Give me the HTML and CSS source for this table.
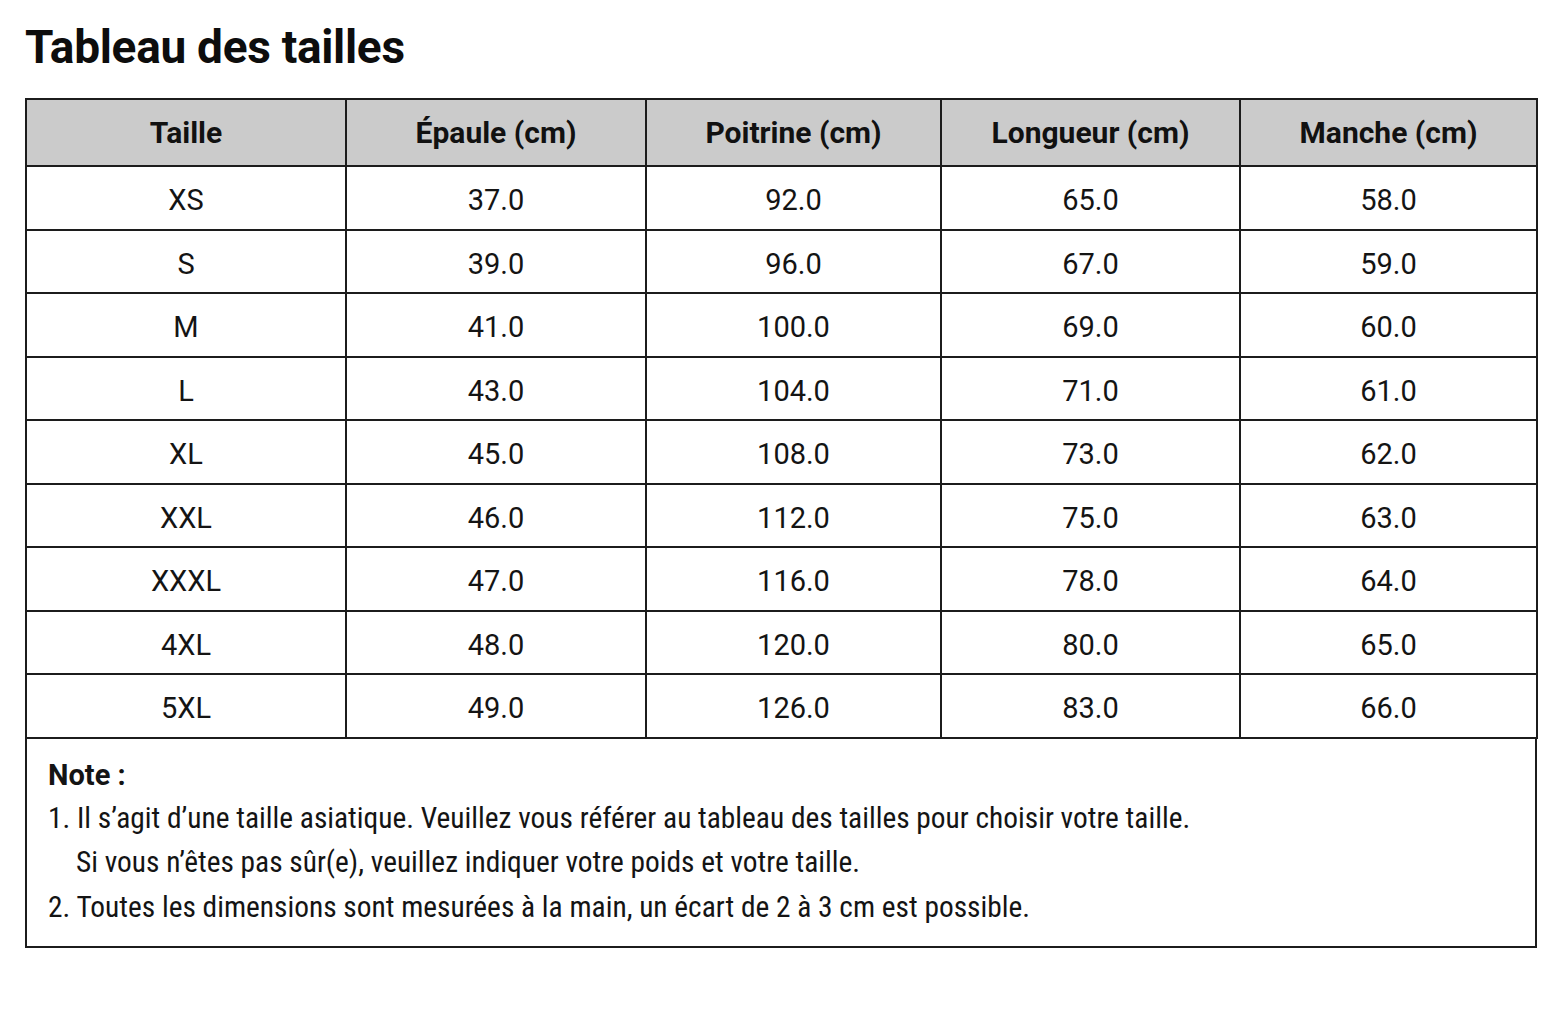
FILE: index.html
```html
<!DOCTYPE html>
<html lang="fr">
<head>
<meta charset="utf-8">
<title>Tableau des tailles</title>
<link rel="stylesheet" href="styles.css">
</head>
<body>
<main class="page">
  <h1 class="title">Tableau des tailles</h1>
  <table class="sizes">
    <colgroup>
      <col class="c1"><col class="c2"><col class="c3"><col class="c4"><col class="c5">
    </colgroup>
    <thead>
      <tr class="head">
        <th>Taille</th><th>Épaule (cm)</th><th>Poitrine (cm)</th><th>Longueur (cm)</th><th>Manche (cm)</th>
      </tr>
    </thead>
    <tbody>
      <tr><td>XS</td><td>37.0</td><td>92.0</td><td>65.0</td><td>58.0</td></tr>
      <tr><td>S</td><td>39.0</td><td>96.0</td><td>67.0</td><td>59.0</td></tr>
      <tr><td>M</td><td>41.0</td><td>100.0</td><td>69.0</td><td>60.0</td></tr>
      <tr><td>L</td><td>43.0</td><td>104.0</td><td>71.0</td><td>61.0</td></tr>
      <tr><td>XL</td><td>45.0</td><td>108.0</td><td>73.0</td><td>62.0</td></tr>
      <tr><td>XXL</td><td>46.0</td><td>112.0</td><td>75.0</td><td>63.0</td></tr>
      <tr><td>XXXL</td><td>47.0</td><td>116.0</td><td>78.0</td><td>64.0</td></tr>
      <tr><td>4XL</td><td>48.0</td><td>120.0</td><td>80.0</td><td>65.0</td></tr>
      <tr><td>5XL</td><td>49.0</td><td>126.0</td><td>83.0</td><td>66.0</td></tr>
    </tbody>
  </table>
  <section class="note">
    <p class="note-title">Note :</p>
    <p class="note-line">1. Il s’agit d’une taille asiatique. Veuillez vous référer au tableau des tailles pour choisir votre taille.</p>
    <p class="note-line indent">Si vous n’êtes pas sûr(e), veuillez indiquer votre poids et votre taille.</p>
    <p class="note-line">2. Toutes les dimensions sont mesurées à la main, un écart de 2 à 3 cm est possible.</p>
  </section>
</main>
</body>
</html>
```
FILE: styles.css
```css
html, body {
  margin: 0;
  padding: 0;
  background: #ffffff;
}
body {
  font-family: "Roboto", "Open Sans", "Liberation Sans", sans-serif;
  font-stretch: 75%;
  color: #141414;
}
.page {
  padding: 0 21px 0 25px;
}
.title {
  margin: 0;
  padding-top: 20px;
  height: 98px;
  box-sizing: border-box;
  font-size: 46px;
  line-height: 54px;
  font-weight: 700;
  font-stretch: 88%;
  color: #0d0d0d;
  letter-spacing: -0.3px;
}
.sizes {
  width: 1511px;
  border-collapse: collapse;
  table-layout: fixed;
}
.c1 { width: 320px; }
.c2 { width: 300px; }
.c3 { width: 295px; }
.c4 { width: 299px; }
.c5 { width: 297px; }
.sizes th,
.sizes td {
  border: 2px solid #1c1c1c;
  text-align: center;
  padding: 0;
}
.sizes th {
  height: 65px;
  background: #cbcbcb;
  font-size: 30px;
  font-weight: 700;
  font-stretch: 88%;
  color: #111;
}
.sizes td {
  height: 63.5px;
  padding-top: 5px;
  box-sizing: border-box;
  font-size: 29px;
  font-weight: 400;
  font-stretch: 88%;
}
.note {
  width: 1512px;
  box-sizing: border-box;
  border: 2px solid #1c1c1c;
  border-top: none;
  padding: 15px 20px 17px 21px;
}
.note p {
  margin: 0;
}
.note-title {
  font-size: 29px;
  line-height: 42px;
  font-weight: 700;
  font-stretch: 88%;
}
.note-line {
  font-size: 29.4px;
  line-height: 44.5px;
  font-stretch: 75%;
}
.indent {
  padding-left: 28px;
}
```
